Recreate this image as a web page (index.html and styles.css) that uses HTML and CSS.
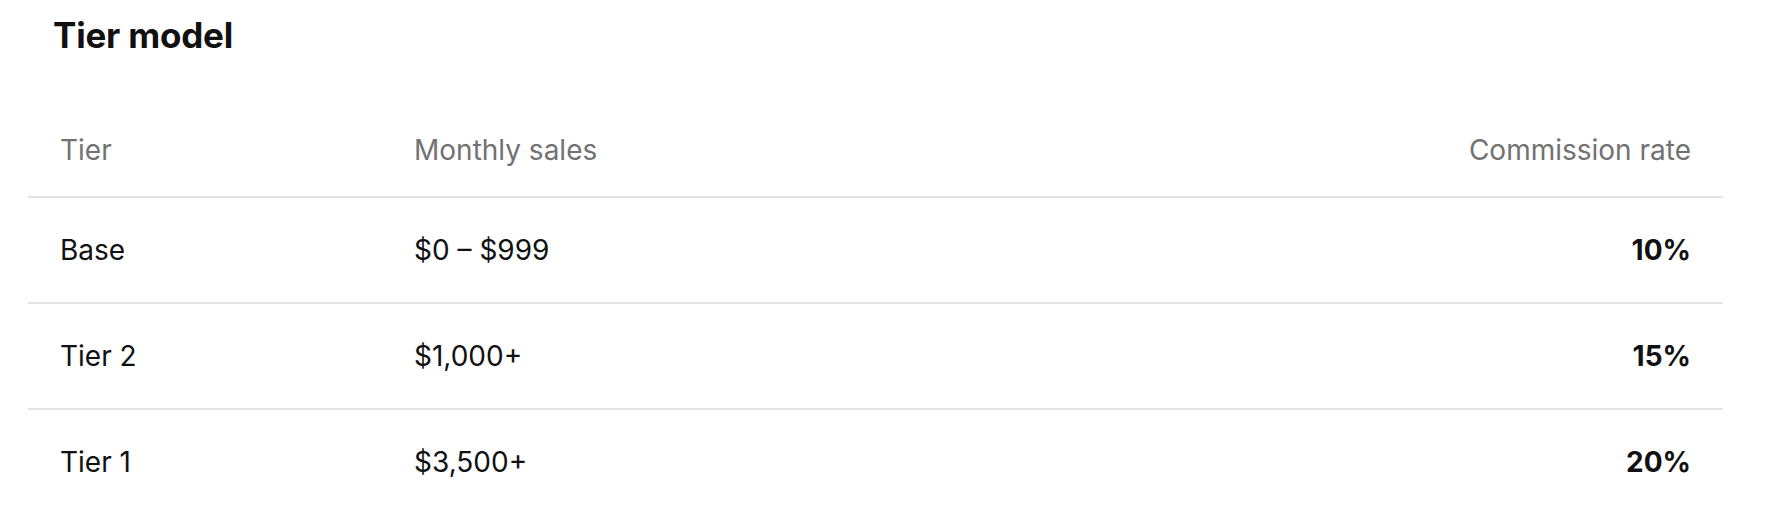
FILE: index.html
```html
<!DOCTYPE html>
<html lang="en">
<head>
    <meta charset="UTF-8">
    <meta name="viewport" content="width=device-width, initial-scale=1.0">
    <title>Tier model</title>
    <link rel="stylesheet" href="styles.css">
</head>
<body>
    <div class="panel">
        <h2 class="title">Tier model</h2>
        <table class="tiers">
            <thead>
                <tr>
                    <th>Tier</th>
                    <th>Monthly sales</th>
                    <th class="rate">Commission rate</th>
                </tr>
            </thead>
            <tbody>
                <tr>
                    <td>Base</td>
                    <td>$0 – $999</td>
                    <td class="rate">10%</td>
                </tr>
                <tr>
                    <td>Tier 2</td>
                    <td>$1,000+</td>
                    <td class="rate">15%</td>
                </tr>
                <tr>
                    <td>Tier 1</td>
                    <td>$3,500+</td>
                    <td class="rate">20%</td>
                </tr>
            </tbody>
        </table>
    </div>
</body>
</html>
```

FILE: styles.css
```css
body {
    margin: 0;
    font-family: Inter, "Liberation Sans", sans-serif;
    background-color: #fff;
    color: #111;
}
.panel {
    padding: 0 49px 0 28px;
}
.title {
    margin: 0;
    padding: 15px 0 0 25px;
    font-size: 35px;
    font-weight: 700;
    line-height: 40px;
    letter-spacing: -0.2px;
    color: #111;
}
.tiers {
    width: 100%;
    margin-top: 49px;
    border-collapse: collapse;
}
.tiers th,
.tiers td {
    padding: 0 32px;
    text-align: left;
    font-size: 28px;
}
.tiers th {
    height: 92px;
    font-weight: 400;
    color: #727272;
    border-bottom: 2px solid #e4e4e4;
}
.tiers td {
    height: 104px;
    border-bottom: 2px solid #e4e4e4;
}
.tiers tbody tr:last-child td {
    border-bottom: none;
}
.tiers th:first-child,
.tiers td:first-child {
    width: 290px;
}
.tiers .rate {
    text-align: right;
}
.tiers td.rate {
    font-weight: 700;
}
```
